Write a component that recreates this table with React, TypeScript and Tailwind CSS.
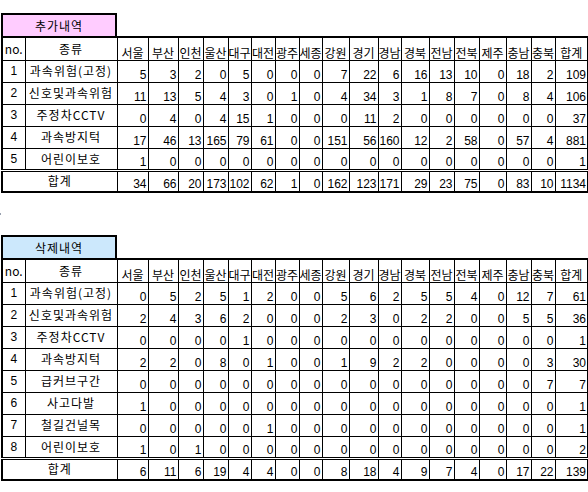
import React from "react";

const regions = ["서울", "부산", "인천", "울산", "대구", "대전", "광주", "세종", "강원", "경기", "경남", "경북", "전남", "전북", "제주", "충남", "충북", "합계"];
const widths = [31, 30, 25, 25, 23, 24, 24, 23, 27, 29, 23, 28, 25, 25, 27, 25, 24, 33];

type Row = { name: string; values: number[] };

const added: Row[] = [
  { name: "과속위험(고정)", values: [5, 3, 2, 0, 5, 0, 0, 0, 7, 22, 6, 16, 13, 10, 0, 18, 2, 109] },
  { name: "신호및과속위험", values: [11, 13, 5, 4, 3, 0, 1, 0, 4, 34, 3, 1, 8, 7, 0, 8, 4, 106] },
  { name: "주정차CCTV", values: [0, 4, 0, 4, 15, 1, 0, 0, 0, 11, 2, 0, 0, 0, 0, 0, 0, 37] },
  { name: "과속방지턱", values: [17, 46, 13, 165, 79, 61, 0, 0, 151, 56, 160, 12, 2, 58, 0, 57, 4, 881] },
  { name: "어린이보호", values: [1, 0, 0, 0, 0, 0, 0, 0, 0, 0, 0, 0, 0, 0, 0, 0, 0, 1] },
];
const addedTotal = [34, 66, 20, 173, 102, 62, 1, 0, 162, 123, 171, 29, 23, 75, 0, 83, 10, 1134];

const removed: Row[] = [
  { name: "과속위험(고정)", values: [0, 5, 2, 5, 1, 2, 0, 0, 5, 6, 2, 5, 5, 4, 0, 12, 7, 61] },
  { name: "신호및과속위험", values: [2, 4, 3, 6, 2, 0, 0, 0, 2, 3, 0, 2, 2, 0, 0, 5, 5, 36] },
  { name: "주정차CCTV", values: [0, 0, 0, 0, 1, 0, 0, 0, 0, 0, 0, 0, 0, 0, 0, 0, 0, 1] },
  { name: "과속방지턱", values: [2, 2, 0, 8, 0, 1, 0, 0, 1, 9, 2, 2, 0, 0, 0, 0, 3, 30] },
  { name: "급커브구간", values: [0, 0, 0, 0, 0, 0, 0, 0, 0, 0, 0, 0, 0, 0, 0, 0, 7, 7] },
  { name: "사고다발", values: [1, 0, 0, 0, 0, 0, 0, 0, 0, 0, 0, 0, 0, 0, 0, 0, 0, 1] },
  { name: "철길건널목", values: [0, 0, 0, 0, 0, 1, 0, 0, 0, 0, 0, 0, 0, 0, 0, 0, 0, 1] },
  { name: "어린이보호", values: [1, 0, 1, 0, 0, 0, 0, 0, 0, 0, 0, 0, 0, 0, 0, 0, 0, 2] },
];
const removedTotal = [6, 11, 6, 19, 4, 4, 0, 0, 8, 18, 4, 9, 7, 4, 0, 17, 22, 139];

function SheetBlock({ title, titleBg, rows, total }: { title: string; titleBg: string; rows: Row[]; total: number[] }) {
  return (
    <div className="ml-[1px]">
      <div className={`flex h-[23px] w-[116px] items-center justify-center border-2 border-b-0 border-black tracking-[1px] ${titleBg}`}>
        {title}
      </div>
      <table className="w-[586px] table-fixed border-collapse border-2 border-black">
        <colgroup>
          <col className="w-[23px]" />
          <col className="w-[92px]" />
          {widths.map((w, i) => (
            <col key={i} style={{ width: w }} />
          ))}
        </colgroup>
        <thead>
          <tr className="h-[23px]">
            <th className="border border-black p-0 text-center align-middle font-normal">no.</th>
            <th className="border border-black p-0 text-center align-middle font-normal tracking-[1px]">종류</th>
            {regions.map((r) => (
              <th key={r} className="overflow-hidden whitespace-nowrap border border-black p-0 text-center align-bottom font-normal leading-[15px]">
                {r}
              </th>
            ))}
          </tr>
        </thead>
        <tbody>
          {rows.map((row, i) => (
            <tr key={i} className="h-[22px]">
              <td className="border border-black p-0 text-center align-middle font-['Liberation_Sans']">{i + 1}</td>
              <td className="whitespace-nowrap border border-black p-0 text-center align-middle tracking-[1px]">{row.name}</td>
              {row.values.map((v, j) => (
                <td key={j} className="border border-black p-0 pr-[1px] text-right align-bottom font-['Liberation_Sans'] leading-[14px]">
                  {v}
                </td>
              ))}
            </tr>
          ))}
          <tr className="h-[22px]">
            <td colSpan={2} className="border border-t-[3px] border-double border-black p-0 text-center align-middle tracking-[1px]">
              합계
            </td>
            {total.map((v, j) => (
              <td key={j} className="border border-t-[3px] border-double border-black p-0 pr-[1px] text-right align-bottom font-['Liberation_Sans'] leading-[14px]">
                {v}
              </td>
            ))}
          </tr>
        </tbody>
      </table>
    </div>
  );
}

export default function App() {
  return (
    <div className="h-[492px] w-[588px] bg-white pt-[13px] font-['Noto_Sans_CJK_KR',sans-serif] text-[12px] text-black">
      <SheetBlock title="추가내역" titleBg="bg-[#ffccff]" rows={added} total={addedTotal} />
      <div className="flex h-[42px] items-center">
        <div className="h-[2px] w-[1px] bg-gray-400" />
      </div>
      <SheetBlock title="삭제내역" titleBg="bg-[#cce8fc]" rows={removed} total={removedTotal} />
    </div>
  );
}
